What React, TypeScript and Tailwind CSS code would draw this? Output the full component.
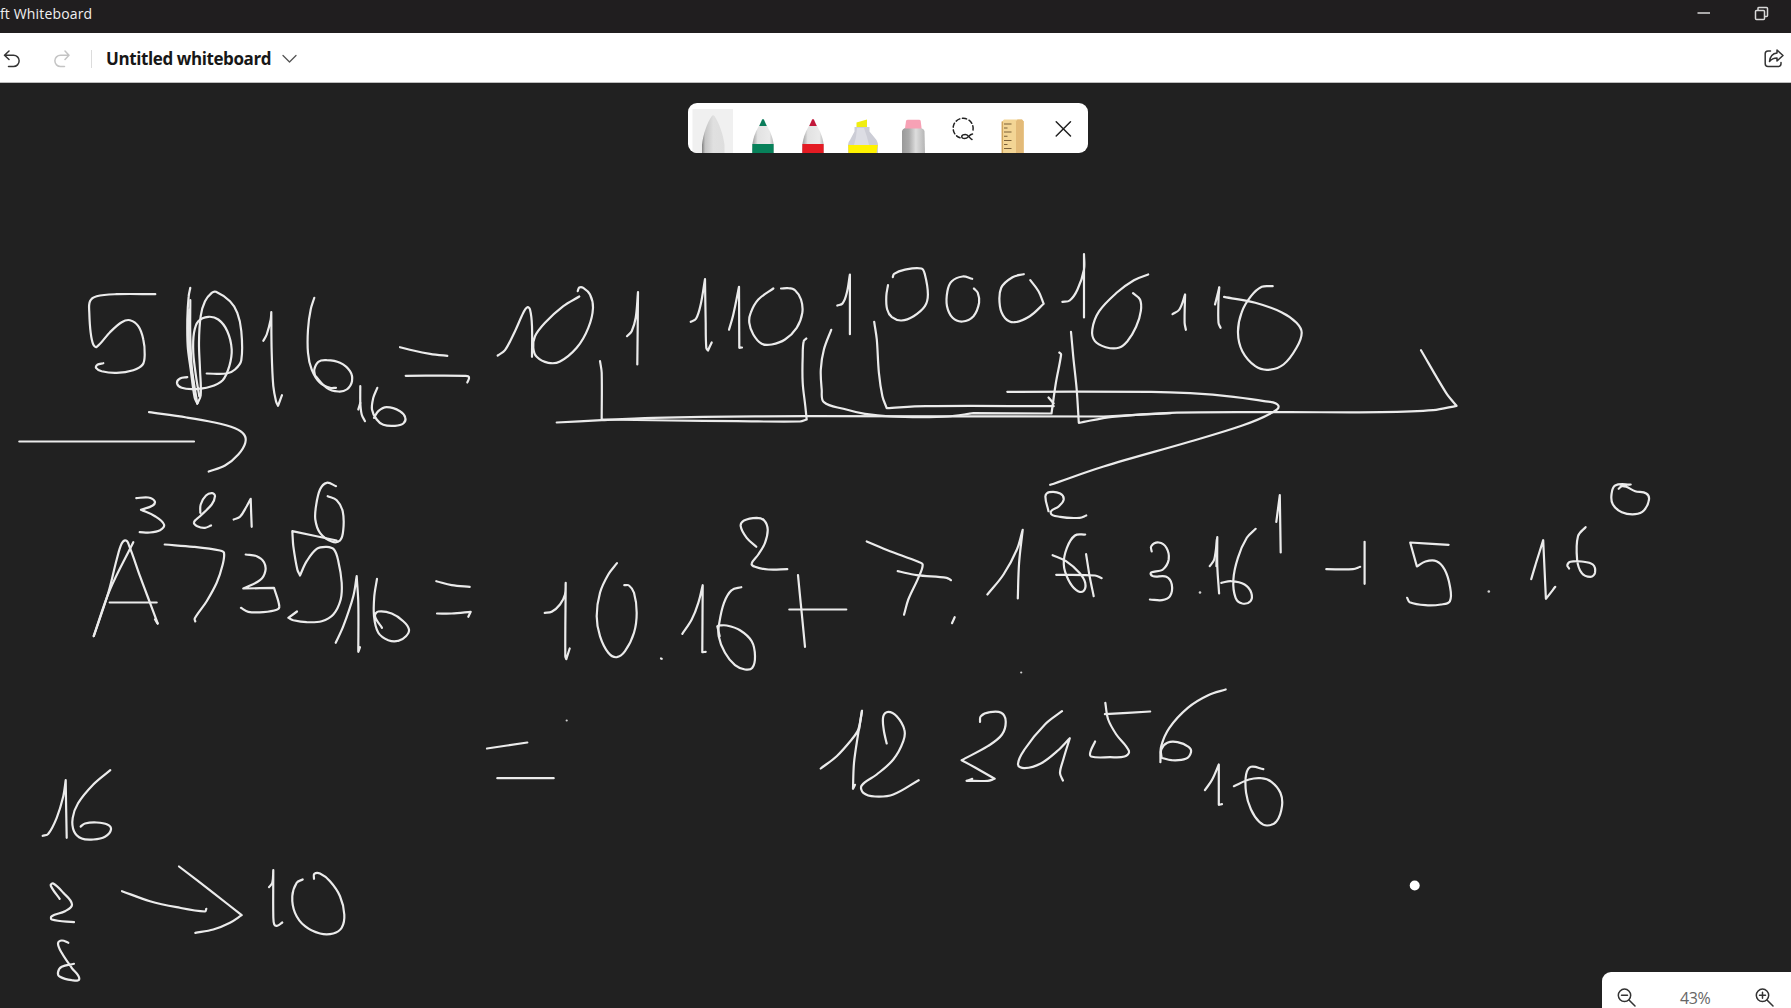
import React from "react";

type InkGroup = { x: number; y: number; sx: number; sy: number; strokes: string[] };

// Points are "x,y" pairs; "/" marks a sharp corner at the preceding point.
const ink: InkGroup[] = [
  {
    x: 0, y: 270, sx: 3, sy: 3,
    strokes: [
      "466,74 350,74 290,80 270,95 268,130 272,190 280,225 290,232 330,188 365,158 390,152 415,170 430,210 434,255 428,285 400,302 350,310 305,305 288,295 292,286 310,281",
      "571,55 566,80 562,150 563,230 572,300 584,385 592,402",
      "571,92 571,200 576,300 592,402",
      "568,120 566,200 570,270 582,350",
      "592,402 602,378 600,300 597,220 602,140 615,95 635,70 648,67 690,95 712,130 724,185 724,272 705,300 680,312 620,312",
      "598,380 588,320 580,250 582,190 595,155 625,142 655,150 682,185 695,240 688,290 668,332 630,352 580,359 545,355 531,341 540,327 562,323",
      "790,214 800,195 812,150 814,128 / 815,250 820,350 828,395 834,409 / 846,377",
      "943,85 932,120 924,180 924,250 935,300 960,340 990,355 1008,355",
      "945,318 943,300 955,277 980,272 1020,280 1050,305 1056,335 1040,360 1015,366 980,355 945,318",
      "1081,350 1081,400 1085,435 1095,455",
      "1075,420 1081,400",
      "1132,355 1120,385 1116,420 1130,450 1150,466 1185,469 1210,462 1216,445 1200,425 1160,413 1135,425 1122,445",
      "1200,233 1240,243 1290,253 1342,259",
      "1217,319 1395,319 1407,323 1402,339",
      "58,516 582,516",
      "447,428 560,444 640,458 705,476 732,495 736,520 715,555 675,588 626,606",
    ],
  },
  {
    x: 470, y: 240, sx: 3, sy: 3,
    strokes: [
      "83,348 105,332 135,275 160,220 172,203 180,210 186,260 186,352",
      "328,171 280,200 225,250 195,290 190,325 200,352 235,370 270,366 320,325 355,265 369,205 360,165 340,145 328,144 323,155",
      "471,290 485,275 497,235 504,158 / 502,375",
      "662,247 678,238 692,195 705,119 / 707,250 709,325 714,333 / 725,309",
      "777,271 790,225 807,142 / 808,325 / 816,324",
      "910,147 865,180 842,220 838,250 850,285 875,313 905,315 945,300 980,265 997,220 993,180 975,152 955,146 933,147",
      "390,365 395,400 395,540",
      "260,549 395,542 550,535 700,532 1010,530",
      "395,540 600,543 800,545 990,546 1010,540 / 1006,500 998,430 998,350 1001,305 1009,297",
    ],
  },
  {
    x: 800, y: 240, sx: 2.306, sy: 3,
    strokes: [
      "86,198 98,192 108,160 115,105 / 115,284",
      "203,137 199,170 201,210 212,233 234,243 262,230 288,200 295,165 288,105 280,87 240,91 217,103 214,113",
      "397,118 375,111 350,125 340,155 339,200 352,235 375,246 400,230 413,190 410,160 401,147",
      "516,104 490,113 464,145 461,200 473,236 495,248 530,230 562,193 / 550,155 531,122",
      "605,187 622,183 640,150 655,90 655,44 / 655,234",
      "803,105 770,122 730,160 690,215 674,270 680,305 705,323 735,325 755,305 775,262 786,215 784,180 768,161",
      "859,224 875,210 888,165 / 887,250 890,271",
      "957,195 967,143 / 965,180 965,250 970,265",
      "1090,140 1065,142 1040,170 1018,220 1010,280 1020,335 1050,380 1080,391 1115,375 1145,325 1157,280 1145,250 1110,218 1050,190 978,172",
      "72,271 55,330 48,390 50,450 55,488 100,508 150,523 210,531 280,533 340,531 400,521 / 580,522 / 590,430 602,345 598,339",
      "171,247 177,300 182,400 190,470 200,506 / 290,500 585,500",
      "573,474 585,492",
      "15,530 700,531 / 855,521",
      "625,277 630,350 638,450 643,550 / 720,532 855,520 1110,518 1340,518 1460,512 1514,499 / 1490,460 1432,332",
      "478,457 810,457 900,461 1000,472 1070,485 1103,498 1085,522 1020,558 900,606 700,681 577,736",
      "573,815 566,770 575,758 600,762 608,780 597,800 578,820 600,832 645,835 660,828",
    ],
  },
  {
    x: 60, y: 470, sx: 3, sy: 3,
    strokes: [
      "229,86 265,84 284,95 278,108 243,121 / 285,140 312,165 300,182 270,189 239,188",
      "421,130 422,105 438,78 457,71 465,80 455,105 420,140 402,158 412,170 435,175 453,168",
      "521,150 540,142 560,110 572,88 / 575,172",
      "828,50 800,40 780,60 768,110 766,150 780,190 815,216 840,213 850,180 848,125 830,92 803,80",
      "101,500 150,360 220,218",
      "101,500 145,370 170,270 185,222 198,213 208,230 240,320 270,400 293,462",
      "285,450 293,462",
      "149,399 290,399",
      "314,225 400,232 480,243 492,250 488,285 470,340 440,395 404,447 406,456",
      "557,255 590,260 612,278 616,305 600,332 550,357 / 642,355 / 658,410 650,421 610,428 565,427 543,415",
      "830,213 / 697,185 / 700,230 712,300 720,318 / 740,275 770,238 800,232 822,240 835,275 845,340 842,390 820,435 785,455 740,458 700,452 685,445 / 711,426",
      "827,520 850,470 880,380 890,320 / 895,400 895,547 / 900,533",
      "951,328 943,380 942,440 955,490 985,512 1015,514 1038,500 1047,480 1030,455 995,432 955,426 945,440 966,475",
      "1129,335 1175,347 1229,352",
      "1131,432 1175,432 1232,427 / 1225,442",
    ],
  },
  {
    x: 470, y: 500, sx: 3, sy: 3,
    strokes: [
      "224,340 245,337 270,315 285,285 287,250 / 286,470 289,479 / 299,447",
      "441,191 415,225 390,280 380,350 390,410 415,460 440,473 465,455 492,400 500,340 492,280 477,258 463,257",
      "573,477 575,478",
      "637,403 665,360 685,310 698,257 / 697,458 / 707,457",
      "814,263 785,272 762,310 748,370 746,410 765,460 795,497 825,510 847,505 855,470 845,425 810,392 770,378 745,378",
      "742,380 749,410",
      "859,142 830,115 812,80 822,63 860,55 882,62 893,90 885,130 865,165 845,192 855,202 895,210 952,209",
      "984,227 995,340 1005,442",
      "958,330 1129,330",
      "1190,126 1260,155 1345,187 1358,196 1345,235 1315,300 1302,346",
      "1283,215 1340,227 1430,235 1443,242",
      "1454,353 1446,371",
      "51,747 172,729",
      "82,836 251,836",
      "1052,807 1100,770 1145,720 1165,690 1176,634 / 1165,700 1152,790 1149,868 / 1155,856",
      "1176,634 1167,690",
      "1250,732 1241,690 1240,650 1255,637 1280,650 1303,690 1300,725 1270,780 1220,825 1175,858 1180,880 1215,891 1270,885 1346,842",
    ],
  },
  {
    x: 970, y: 470, sx: 2.24, sy: 3,
    strokes: [
      "39,375 75,315 105,240 118,181 / 110,280 107,387",
      "258,195 235,198 217,235 210,285 220,330 238,362 254,365 258,340 245,310 215,275 185,257",
      "193,316 280,318 295,326",
      "260,254 268,320 277,380",
      "407,246 406,230 423,219 440,235 445,270 432,300 405,315 440,322 452,345 448,380 430,392 403,390",
      "537,290 547,270 554,203 / 554,290 558,372",
      "553,210 552,290",
      "640,178 620,205 600,265 590,330 595,385 610,402 628,395 630,370 615,345 585,335 563,340",
      "686,157 694,77 / 696,249",
      "798,299 858,299 874,292",
      "884,217 884,343",
      "1072,226 986,219 / 1001,291 / 1020,276 1045,275 1063,300 1075,350 1075,395 1055,405 1020,407 985,398 979,385",
      "1257,329 1268,280 1284,212 / 1290,388 / 1311,352",
      "1379,173 1362,200 1360,270 1370,310 1390,322 1400,310 1395,285 1370,276 1345,277 1338,287 1342,297",
      "1453,58 1460,50 1470,52 1490,65 1515,72 1521,90 1510,122 1490,134 1460,128 1440,105 1437,75 1445,48 1480,45",
    ],
  },
  {
    x: 800, y: 650, sx: 2.45, sy: 3,
    strokes: [
      "441,217 443,200 465,188 493,190 504,215 495,255 460,290 396,332 / 430,355 477,388 / 460,394 408,394 / 422,388",
      "642,185 600,225 550,300 534,345 550,356 590,342 630,305 661,266 / 645,330 637,370 644,393",
      "748,160 755,210 775,255 806,305 795,321 760,323 713,321 712,305 723,276",
      "747,194 858,186",
      "1043,120 1000,137 950,175 905,235 885,290 883,338",
      "886,325 885,300 900,280 925,278 952,292 958,308 945,328 910,332 886,325",
      "992,422 1010,390 1026,345 / 1026,466 / 1034,464",
      "1135,359 1105,352 1093,375 1093,430 1105,480 1125,517 1145,528 1168,515 1181,470 1177,430 1155,397 1130,386 1100,390 1063,410",
    ],
  },
  {
    x: 0, y: 750, sx: 3, sy: 3,
    strokes: [
      "128,259 145,253 170,205 190,140 197,92 / 200,265",
      "331,62 280,105 235,160 218,205 222,245 245,267 280,270 315,262 333,240 322,225 290,219 255,222 242,231",
      "179,448 152,408 160,402 190,430 216,465 195,485 155,500 155,510 222,518",
      "205,580 185,573 174,582 185,610 215,655 238,688 215,692 180,682 174,668 185,652 222,643",
      "366,425 450,455 530,473 615,486 619,478",
      "537,351 640,430 725,497 / 690,520 640,540 586,550",
      "807,413 817,400 820,362 / 820,500 823,525 832,529 847,519",
      "908,390 890,400 877,440 885,490 915,530 960,552 1000,552 1025,535 1033,495 1020,440 990,395 960,372 943,373 942,388",
    ],
  },
];

// Distance from the window top to the canvas origin.
const CANVAS_TOP = 83.5;

function toPath(stroke: string, g: InkGroup): string {
  const f = (n: number) => n.toFixed(1);
  let d = "";
  let last: number[] | null = null;
  for (const part of stroke.split("/")) {
    let pts = part.trim().split(/\s+/).map((p) => {
      const [px, py] = p.split(",").map(Number);
      return [g.x + px / g.sx, g.y + py / g.sy - CANVAS_TOP];
    });
    if (last) pts = [last, ...pts];
    else d = `M${f(pts[0][0])} ${f(pts[0][1])}`;
    for (let i = 0; i < pts.length - 1; i++) {
      const p0 = pts[Math.max(0, i - 1)];
      const p1 = pts[i];
      const p2 = pts[i + 1];
      const p3 = pts[Math.min(pts.length - 1, i + 2)];
      // Limit the tangents so that uneven point spacing does not overshoot.
      const len = Math.hypot(p2[0] - p1[0], p2[1] - p1[1]);
      const t = (a: number[], b: number[]) => {
        const m = Math.hypot(b[0] - a[0], b[1] - a[1]) || 1;
        return [((b[0] - a[0]) / m) * len * 0.34, ((b[1] - a[1]) / m) * len * 0.34];
      };
      const t1 = t(p0, p2);
      const t2 = t(p1, p3);
      d += `C${f(p1[0] + t1[0])} ${f(p1[1] + t1[1])} ${f(p2[0] - t2[0])} ${f(p2[1] - t2[1])} ${f(p2[0])} ${f(p2[1])}`;
    }
    last = pts[pts.length - 1];
  }
  return d;
}

function Ink() {
  return (
    <svg
      className="absolute inset-0 h-full w-full"
      viewBox="0 0 1791 925"
      fill="none"
      stroke="#ebebeb"
      strokeWidth="2.2"
      strokeLinecap="round"
      strokeLinejoin="round"
    >
      {ink.map((g, gi) => g.strokes.map((s, i) => <path key={`${gi}-${i}`} d={toPath(s, g)} />))}
      <g fill="#cfcfcf" stroke="none">
        <circle cx="566.7" cy="637.5" r="1.1" />
        <circle cx="1021.2" cy="589.5" r="1.1" />
        <circle cx="1200" cy="509.5" r="1.3" />
        <circle cx="1488.8" cy="508.5" r="1.3" />
      </g>
      <circle cx="1414.7" cy="802.5" r="5" fill="#fff" stroke="none" />
    </svg>
  );
}

function Pen({ color, tip }: { color: string; tip: string }) {
  return (
    <svg width="50" height="50" viewBox="0 0 50 50">
      <path d="M14.3 50V42C15.5 33 18 28 21.5 22H28.5C32 28 34.5 33 35.7 42V50Z" fill="url(#barrel)" />
      <path d="M21.2 23 24 16.8Q25 15.2 26 16.8L28.8 23Z" fill={tip} />
      <path d="M14.4 41H35.6V50H14.3Z" fill={color} />
    </svg>
  );
}

function Toolbar() {
  return (
    <div className="absolute left-[688px] top-5 flex h-[50px] w-[400px] overflow-hidden rounded-[9px] bg-white">
      <svg width="50" height="50" viewBox="0 0 50 50">
        <defs>
          <linearGradient id="barrel">
            <stop offset="0" stopColor="#9b9b9b" />
            <stop offset="0.25" stopColor="#e2e2e2" />
            <stop offset="0.8" stopColor="#eaeaea" />
            <stop offset="1" stopColor="#b5b5b5" />
          </linearGradient>
          <linearGradient id="silver">
            <stop offset="0" stopColor="#808080" />
            <stop offset="0.14" stopColor="#c4c4c4" />
            <stop offset="0.5" stopColor="#e0e0e0" />
            <stop offset="1" stopColor="#dedede" />
          </linearGradient>
          <linearGradient id="metal">
            <stop offset="0" stopColor="#999" />
            <stop offset="0.3" stopColor="#aaa" />
            <stop offset="0.6" stopColor="#ddd" />
            <stop offset="1" stopColor="#b5b5b5" />
          </linearGradient>
        </defs>
        <rect x="4.5" y="6" width="40.5" height="44" fill="#f0f0f0" />
        <path d="M14 50V42C15 32 19 20 23.5 13.5Q25.2 11 26.8 13.5C31 20 35.5 32 36.5 42V50Z" fill="url(#silver)" />
      </svg>
      <Pen color="#07815a" tip="#0b7d5b" />
      <Pen color="#e41b23" tip="#c2183a" />
      <svg width="50" height="50" viewBox="0 0 50 50">
        <path d="M18.5 24.5V19.5L29 16.5V24.5Z" fill="#f0ee10" />
        <path d="M16.5 24H31.5V28.5L38.5 37Q40 40 40 42V50H10V42Q10 39 12 37L16.5 28.5Z" fill="#cccdd6" />
        <path d="M19 25H26L29 34 31 42H16L18 34Z" fill="#dcdde4" />
        <path d="M10.2 42H39.8L38.5 50H10.5Z" fill="#fff200" />
      </svg>
      <svg width="50" height="50" viewBox="0 0 50 50">
        <path d="M14 50V28Q14.5 26 17 25H33Q36 26 36.5 28L37 50Z" fill="url(#metal)" />
        <path d="M17 25.5 18 18Q18.2 16.7 20 16.7H31Q32.5 16.7 32.7 18L33.6 25.5Z" fill="#f7a1b5" />
      </svg>
      <svg width="50" height="50" viewBox="0 0 50 50" fill="none" stroke="#222" strokeWidth="1.5" strokeLinecap="round">
        <path d="M35 27A10 10 0 1 0 22 34.8" strokeDasharray="4.2 2.7" />
        <path d="M34 36.5C31.5 35.5 30.500 31.500 27.5 31.500 22.5 31.5 22.8 35.6 26.5 35.6 30.5 35.6 30.5 31.5 34.5 31" />
      </svg>
      <svg width="50" height="50" viewBox="0 0 50 50">
        <path d="M14.3 18.5 16 16.5H34L35.7 18.5V50H14.3Z" fill="#f3d595" />
        <path d="M28 18.5 29.5 16.5H34L35.7 18.5V50H28Z" fill="#e3ba78" />
        <path d="M14.3 18.5V50" stroke="#d1a55c" strokeWidth="1.5" />
        <path d="M16 21H23.5M16 25H19.5M16 29H23.5M16 33.2H19.5M16 37.5H23.5M16 41.5H19.5M16 45.5H23.5" stroke="#7a6038" strokeWidth="1.1" />
      </svg>
      <svg width="50" height="50" viewBox="0 0 50 50" stroke="#222" strokeWidth="1.5" strokeLinecap="round">
        <path d="M18.2 18.7 32.5 33M32.5 18.7 18.2 33" />
      </svg>
    </div>
  );
}

function ZoomPanel() {
  return (
    <div className="absolute bottom-0 right-0 flex h-[36px] w-[189px] items-start overflow-hidden rounded-tl-[9px] bg-white">
      <svg className="ml-[15px] mt-4 shrink-0" width="20" height="19" viewBox="0 0 20 19" fill="none" stroke="#333" strokeWidth="1.5" strokeLinecap="round">
        <circle cx="7.5" cy="7.3" r="6.2" />
        <path d="M12 12 18 18M4.5 7.3H10.5" />
      </svg>
      <span className="ml-[43px] mt-[18px] w-[36px] shrink-0 whitespace-nowrap text-[16px] leading-[17px] tracking-[-0.4px] text-[#666]">
        43%
      </span>
      <svg className="ml-[39px] mt-4 shrink-0" width="20" height="19" viewBox="0 0 20 19" fill="none" stroke="#333" strokeWidth="1.5" strokeLinecap="round">
        <circle cx="7.5" cy="7.3" r="6.2" />
        <path d="M12 12 18 18M4.5 7.3H10.5M7.5 4.3V10.3" />
      </svg>
    </div>
  );
}

export default function App() {
  return (
    <div className="flex h-[1008px] w-[1791px] flex-col overflow-hidden bg-[#212121] font-['Open_Sans',sans-serif]">
      <div className="flex h-[33px] shrink-0 items-center justify-between bg-[#201e1f]">
        <span className="mb-[5px] whitespace-nowrap text-[14px] leading-5 tracking-[0.15px] text-[#f0f0f0]">ft Whiteboard</span>
        <div className="mb-[7px] mr-[22px] flex items-center gap-[43px]">
          <svg width="14" height="14" viewBox="0 0 14 14" stroke="#d8d8d8" strokeWidth="1.5">
            <path d="M0.5 7H13" />
          </svg>
          <svg width="15" height="15" viewBox="0 0 15 15" fill="none" stroke="#d8d8d8" strokeWidth="1.5">
            <rect x="1.5" y="4.5" width="9" height="9" rx="1" />
            <path d="M4 4V2.2Q4 1.5 5 1.5H12.5Q13.5 1.5 13.5 2.5V9.5Q13.5 10.5 12.5 10.5H11" />
          </svg>
        </div>
      </div>
      <header className="flex h-[50px] shrink-0 items-center border-b border-[#bdbdbd] bg-white pt-0.5">
        <svg className="ml-[3px]" width="18" height="18" viewBox="0 0 18 18" fill="none" stroke="#333" strokeWidth="1.5" strokeLinecap="round" strokeLinejoin="round">
          <path d="M6 1 1.5 5.2 6 9.5M1.8 5.2H10.5A5.3 5.3 0 0 1 10.5 16.5H5.5" />
        </svg>
        <svg className="ml-[32px]" width="18" height="18" viewBox="0 0 18 18" fill="none" stroke="#c4c4c4" strokeWidth="1.5" strokeLinecap="round" strokeLinejoin="round">
          <path d="M12 1 16 5.2 12 9.5M15.8 5.2H7.5A5.3 5.3 0 0 0 7.5 16.5H11.5" />
        </svg>
        <div className="ml-5 h-[18px] w-px bg-[#dcdcdc]" />
        <h1 className="ml-[14px] whitespace-nowrap text-[17px] font-bold tracking-[-0.4px] text-[#171717]">Untitled whiteboard</h1>
        <svg className="ml-[11px]" width="15" height="10" viewBox="0 0 15 10" fill="none" stroke="#555" strokeWidth="1.3" strokeLinecap="round" strokeLinejoin="round">
          <path d="M1 1.5 7.5 8 14 1.5" />
        </svg>
        <svg className="ml-auto mr-[7px]" width="20" height="19" viewBox="0 0 20 19" fill="none" stroke="#333" strokeWidth="1.5" strokeLinecap="round" strokeLinejoin="round">
          <path d="M6.5 2H4Q1.2 2 1.2 4.8V14.5Q1.2 17.5 4 17.5H14Q17 17.5 17 14.8V13.5" />
          <path d="M13 1 19 6.5 13 12V9C9.5 9 7.5 10 5.5 12.5 6 8 8.5 4.5 13 4Z" />
        </svg>
      </header>
      <main className="relative flex-1 overflow-hidden">
        <Ink />
        <Toolbar />
        <ZoomPanel />
      </main>
    </div>
  );
}
